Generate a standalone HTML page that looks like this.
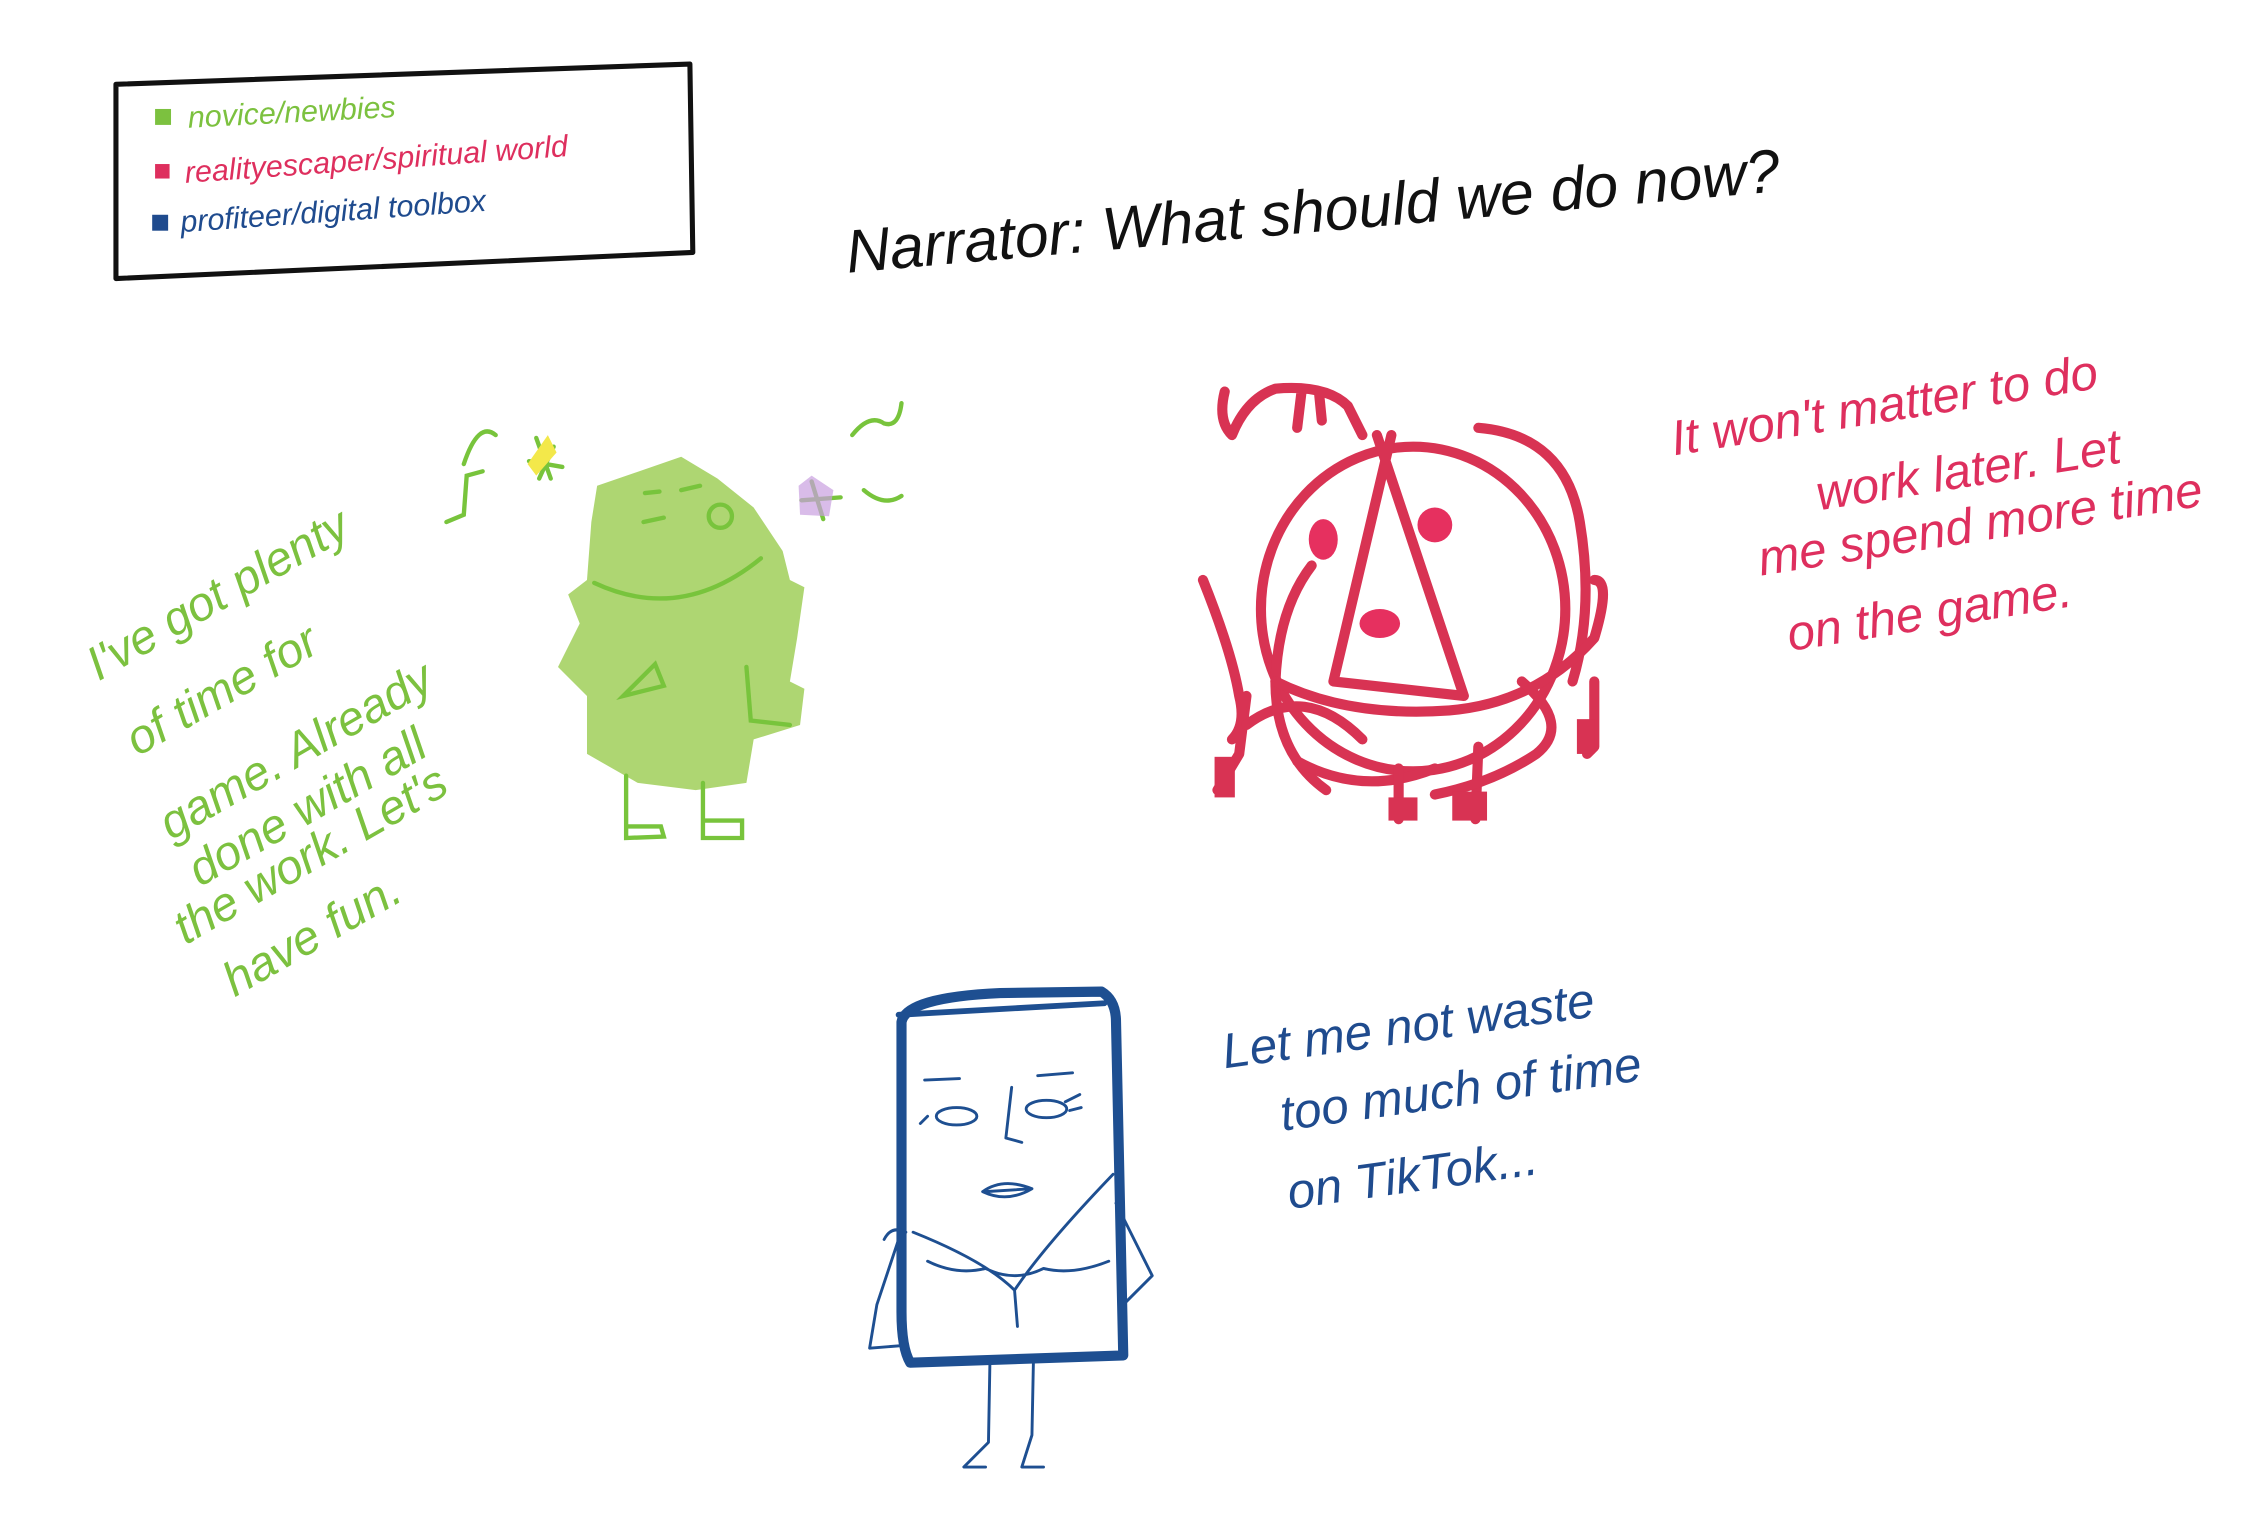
<!DOCTYPE html>
<html><head><meta charset="utf-8"><style>
html,body{margin:0;padding:0;background:#fff;overflow:hidden}
svg{display:block}
text{font-family:"Liberation Sans",sans-serif;font-style:italic}
</style></head><body>
<svg width="2261" height="1518" viewBox="0 0 1560 1047" xmlns="http://www.w3.org/2000/svg">
<rect width="1560" height="1047" fill="#fff"/>
<!-- legend -->
<path d="M80 58 L476 44 L478 174 L80 192 Z" fill="none" stroke="#111" stroke-width="3.5" stroke-linejoin="round"/>
<rect x="107" y="75" width="11" height="11" fill="#7cc13f"/>
<text x="130" y="88" font-size="21" fill="#7cc13f" transform="rotate(-3 130 88)">novice/newbies</text>
<rect x="107" y="113" width="10" height="10" fill="#de2f5e"/>
<text x="128" y="126" font-size="21" fill="#de2f5e" transform="rotate(-4 128 126)">realityescaper/spiritual world</text>
<rect x="105" y="148" width="11" height="11" fill="#1f4b8e"/>
<text x="125" y="160" font-size="21" fill="#1f4b8e" transform="rotate(-4 125 160)">profiteer/digital toolbox</text>
<!-- title -->
<text x="585" y="188" font-size="42" fill="#111" transform="rotate(-5 585 188)">Narrator: What should we do now?</text>

<!-- green figure -->
<g>
<path d="M412 335 L470 315 L495 330 L520 350 L540 380 L545 400 L555 405 L550 440 L545 470 L555 475 L552 500 L520 510 L515 540 L480 545 L440 540 L405 520 L405 480 L385 460 L400 430 L392 410 L405 400 L408 360 Z" fill="#aed672"/>
<g fill="none" stroke="#78c43c" stroke-width="3" stroke-linecap="round">
<path d="M410 402 Q470 430 525 385"/>
<path d="M430 480 L452 458 L458 473 Z"/>
<path d="M515 460 L518 497 L545 500"/>
<circle cx="497" cy="356" r="8"/>
<path d="M444 360 L458 357 M445 340 L455 339 M470 338 L483 335"/>
<path d="M432 535 L432 578 L458 577 L456 570 L432 570"/>
<path d="M485 540 L485 578 L512 578 L512 566 L485 566"/>
<path d="M320 320 Q330 290 342 300 M333 325 L322 328 L320 355 L308 360"/>
<path d="M370 302 L380 330 M365 318 L388 322 M372 330 L382 308"/>
<path d="M588 300 Q600 285 610 292 Q620 295 622 278 M596 338 Q610 350 622 342"/>
<path d="M560 332 L568 358 M553 345 L580 343"/>
</g>
<path d="M364 320 L378 300 L384 312 L370 328Z" fill="#f3e84a"/>
<path d="M551 335 L560 328 L575 338 L572 356 L552 355Z" fill="#c99fe0" opacity=".7"/>
</g>
<g fill="#7cc13f" font-size="33">
<text x="68" y="470" transform="rotate(-30 68 470)">I've got plenty</text>
<text x="95" y="522" transform="rotate(-30 95 522)">of time for</text>
<text x="118" y="580" transform="rotate(-30 118 580)">game. Already</text>
<text x="138" y="612" transform="rotate(-30 138 612)">done with all</text>
<text x="128" y="652" transform="rotate(-30 128 652)">the work. Let's</text>
<text x="162" y="688" transform="rotate(-30 162 688)">have fun.</text>
</g>

<!-- pink figure -->
<g fill="none" stroke="#d83353" stroke-width="7" stroke-linecap="round" stroke-linejoin="round">
<ellipse cx="975" cy="420" rx="105" ry="112"/>
<path d="M915 545 Q880 520 880 470 Q882 420 905 390 M1020 295 Q1080 300 1090 360 Q1100 420 1085 470"/>
<path d="M940 300 L930 280 Q915 265 880 268 Q860 275 850 300 Q840 290 845 270 M898 270 L895 295 M910 270 L912 290"/>
<path d="M960 300 L920 470 L1010 480 L950 300"/>
<path d="M880 470 Q930 495 1000 490 Q1060 485 1100 440 Q1112 400 1100 400 M860 480 L855 520 L840 545 M895 525 Q940 550 990 530 M1100 470 L1100 515 L1095 520"/>
<path d="M965 530 L965 565 M1020 515 L1018 565"/>
<path d="M830 400 Q850 450 855 480 Q860 500 850 510"/>
<path d="M1050 470 Q1085 500 1060 520 Q1030 540 990 548 M860 500 Q900 470 940 510"/>
</g>
<g fill="#d83353">
<rect x="838" y="522" width="14" height="28"/>
<rect x="958" y="550" width="20" height="16"/>
<rect x="1002" y="546" width="24" height="20"/>
<rect x="1088" y="496" width="12" height="24"/>
<ellipse cx="913" cy="372" rx="10" ry="14" fill="#e6305f"/>
<ellipse cx="990" cy="362" rx="12" ry="12" fill="#e6305f"/>
<ellipse cx="952" cy="430" rx="14" ry="10" fill="#e6305f"/>
</g>
<g fill="#de2f5e" font-size="34">
<text x="1155" y="314" transform="rotate(-9 1155 314)">It won't matter to do</text>
<text x="1255" y="352" transform="rotate(-9 1255 352)">work later. Let</text>
<text x="1215" y="397" transform="rotate(-9 1215 397)">me spend more time</text>
<text x="1235" y="449" transform="rotate(-9 1235 449)">on the game.</text>
</g>

<!-- blue figure -->
<g fill="none" stroke="#1e4f91" stroke-linecap="round" stroke-linejoin="round">
<path d="M622 705 Q625 688 690 685 L760 684 Q770 690 770 705 L775 935 L628 940 Q622 930 622 905 Z" stroke-width="7"/>
<path d="M620 700 L762 692" stroke-width="4"/>
<g stroke-width="2">
<path d="M638 745 L662 744 M716 742 L740 740"/>
<ellipse cx="660" cy="770" rx="14" ry="6"/>
<ellipse cx="722" cy="765" rx="14" ry="6"/>
<path d="M640 770 L635 775 M735 760 L745 755 M738 766 L746 764"/>
<path d="M698 750 L694 785 L705 788"/>
<path d="M678 822 Q692 812 712 820 Q695 830 678 822 M680 822 L712 820"/>
<path d="M620 855 L605 900 L600 930 L625 928 M770 830 L795 880 L780 895 L775 900"/>
<path d="M610 855 Q615 845 625 850 M630 850 Q680 870 700 890 Q720 860 768 810 M700 890 L702 915 M640 870 Q660 880 680 875 Q700 885 720 875 Q740 880 765 870"/>
<path d="M683 940 L682 995 L665 1012 L680 1012 M713 940 L712 990 L705 1012 L720 1012"/>
</g>
</g>
<g fill="#1f4b8e" font-size="34">
<text x="845" y="737" transform="rotate(-8 845 737)">Let me not waste</text>
<text x="885" y="780" transform="rotate(-8 885 780)">too much of time</text>
<text x="890" y="834" transform="rotate(-8 890 834)">on TikTok...</text>
</g>
</svg>
</body></html>
